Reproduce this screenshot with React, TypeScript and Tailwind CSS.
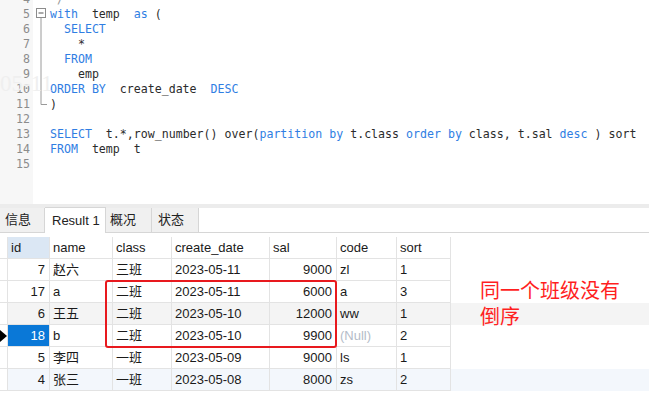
import React from 'react';

type Tok = [string, 'k' | 'p' | 'c'];

const codeLines: { n: number; toks: Tok[] }[] = [
  { n: 4, toks: [['*/', 'c']] },
  { n: 5, toks: [['with', 'k'], ['  temp  ', 'p'], ['as', 'k'], [' (', 'p']] },
  { n: 6, toks: [['  ', 'p'], ['SELECT', 'k']] },
  { n: 7, toks: [['    *', 'p']] },
  { n: 8, toks: [['  ', 'p'], ['FROM', 'k']] },
  { n: 9, toks: [['    emp', 'p']] },
  { n: 10, toks: [['ORDER BY', 'k'], ['  create_date  ', 'p'], ['DESC', 'k']] },
  { n: 11, toks: [[')', 'p']] },
  { n: 12, toks: [] },
  {
    n: 13,
    toks: [
      ['SELECT', 'k'],
      ['  t.*,row_number() over(', 'p'],
      ['partition by', 'k'],
      [' t.class ', 'p'],
      ['order by', 'k'],
      [' class, t.sal ', 'p'],
      ['desc', 'k'],
      [' ) sort', 'p'],
    ],
  },
  { n: 14, toks: [['FROM', 'k'], ['  temp  t', 'p']] },
  { n: 15, toks: [] },
];

const tokColor = { k: 'text-[#2f7ee3]', p: 'text-[#2b2b2b]', c: 'text-[#9a9a9a]' };

type Row = { id: string; name: string; cls: string; date: string; sal: string; code: string; sort: string };

const rows: Row[] = [
  { id: '7', name: '赵六', cls: '三班', date: '2023-05-11', sal: '9000', code: 'zl', sort: '1' },
  { id: '17', name: 'a', cls: '二班', date: '2023-05-11', sal: '6000', code: 'a', sort: '3' },
  { id: '6', name: '王五', cls: '二班', date: '2023-05-10', sal: '12000', code: 'ww', sort: '1' },
  { id: '18', name: 'b', cls: '二班', date: '2023-05-10', sal: '9900', code: '', sort: '2' },
  { id: '5', name: '李四', cls: '一班', date: '2023-05-09', sal: '9000', code: 'ls', sort: '1' },
  { id: '4', name: '张三', cls: '一班', date: '2023-05-08', sal: '8000', code: 'zs', sort: '2' },
];

const rowBg = ['bg-white', 'bg-white', 'bg-[#f4f4f4]', 'bg-white', 'bg-white', 'bg-[#f3f7fc]'];

const cell = 'h-[22px] shrink-0 border-r border-b border-[#e3e3e3] flex items-center whitespace-nowrap';

const App: React.FC = () => {
  return (
    <div
      className="relative w-[649px] h-[400px] overflow-hidden bg-white"
      style={{ fontFamily: '"Liberation Sans", "Noto Sans CJK SC", sans-serif' }}
    >
      {/* editor */}
      <div
        className="flex h-[204px] overflow-hidden text-[11.6px] leading-[15px]"
        style={{ fontFamily: '"DejaVu Sans Mono", monospace' }}
      >
        <div className="w-[33px] shrink-0 bg-[#f7f7f7] pr-[3px] text-right text-[#8c8c8c]">
          <div className="-mt-[8px]">
            {codeLines.map((l) => (
              <div key={l.n} className="h-[15px]">{l.n}</div>
            ))}
          </div>
        </div>
        <div className="relative w-[17px] shrink-0">
          <svg className="absolute left-0 top-0" width="17" height="120" viewBox="0 0 17 120">
            <rect x="3.5" y="8.5" width="9" height="9" fill="white" stroke="#8c8c8c" />
            <line x1="5.5" y1="13" x2="10.5" y2="13" stroke="#555" />
            <line x1="8" y1="18" x2="8" y2="104.5" stroke="#9a9a9a" />
            <line x1="8" y1="104.5" x2="14" y2="104.5" stroke="#9a9a9a" />
          </svg>
        </div>
        <div className="-mt-[8px] whitespace-pre">
          {codeLines.map((l) => (
            <div key={l.n} className="h-[15px]">
              {l.toks.map(([t, k], i) => (
                <span key={i} className={tokColor[k]}>{t}</span>
              ))}
            </div>
          ))}
        </div>
      </div>

      {/* faint watermark */}
      <div
        className="pointer-events-none absolute left-0 top-[67px] text-[23px] text-[#efefef]"
        style={{ fontFamily: '"Liberation Serif", serif' }}
      >
        05-11
      </div>

      <div className="h-[4px] bg-[#ececec]" />

      {/* tabs */}
      <div className="flex h-[25px] items-end border-b border-[#d6d6d6] text-[13px] text-[#222]">
        <div className="flex h-[24px] w-[45px] items-center border-r border-[#d6d6d6] bg-[#f0f0f0] pl-[5px]">信息</div>
        <div className="-mb-px flex h-[26px] w-[61px] items-center border border-b-0 border-l-0 border-[#d6d6d6] bg-white pl-[7px]">
          Result 1
        </div>
        <div className="flex h-[24px] w-[46px] items-center border-r border-[#d6d6d6] bg-[#f0f0f0] pl-[4px]">概况</div>
        <div className="flex h-[24px] w-[47px] items-center border-r border-[#d6d6d6] bg-[#f0f0f0] pl-[6px]">状态</div>
      </div>

      {/* grid */}
      <div className="pt-[4px] text-[13px] text-[#1a1a1a]">
        <div className="flex">
          <div className={`${cell} w-[8px] bg-white`} />
          <div className={`${cell} w-[42px] bg-[#dbe7f4] pl-[3px]`}>id</div>
          <div className={`${cell} w-[63px] pl-[3px]`}>name</div>
          <div className={`${cell} w-[59px] pl-[3px]`}>class</div>
          <div className={`${cell} w-[98px] pl-[3px]`}>create_date</div>
          <div className={`${cell} w-[67px] pl-[3px]`}>sal</div>
          <div className={`${cell} w-[60px] pl-[3px]`}>code</div>
          <div className={`${cell} w-[54px] pl-[3px]`}>sort</div>
        </div>
        {rows.map((r, i) => {
          const sel = r.id === '18';
          return (
            <div key={r.id} className={`flex ${rowBg[i]}`}>
              <div className={`${cell} w-[8px] bg-white`}>
                {sel && (
                  <svg width="7" height="12" viewBox="0 0 7 12">
                    <path d="M0 0 L7 6 L0 12 Z" fill="#000" />
                  </svg>
                )}
              </div>
              <div
                className={`${cell} w-[42px] justify-end pr-[4px] ${sel ? 'bg-[#0a78d7] text-white' : ''}`}
              >
                {r.id}
              </div>
              <div className={`${cell} w-[63px] pl-[3px]`}>{r.name}</div>
              <div className={`${cell} w-[59px] pl-[3px]`}>{r.cls}</div>
              <div className={`${cell} w-[98px] pl-[3px]`}>{r.date}</div>
              <div className={`${cell} w-[67px] justify-end pr-[4px]`}>{r.sal}</div>
              <div className={`${cell} w-[60px] pl-[3px]`}>
                {r.code || <span className="text-[#b4bcc8]">(Null)</span>}
              </div>
              <div className={`${cell} w-[54px] pl-[3px]`}>{r.sort}</div>
            </div>
          );
        })}
      </div>

      {/* annotation */}
      <div className="absolute left-[105px] top-[280px] h-[68px] w-[232px] rounded-[3px] border-2 border-[#e8191e]" />
      <div
        className="absolute left-[480px] top-[277px] text-[20px] leading-[26px] text-[#ff1f1f]"
        style={{ fontFamily: '"Noto Sans CJK SC", sans-serif' }}
      >
        同一个班级没有
        <br />
        倒序
      </div>
    </div>
  );
};

export default App;
